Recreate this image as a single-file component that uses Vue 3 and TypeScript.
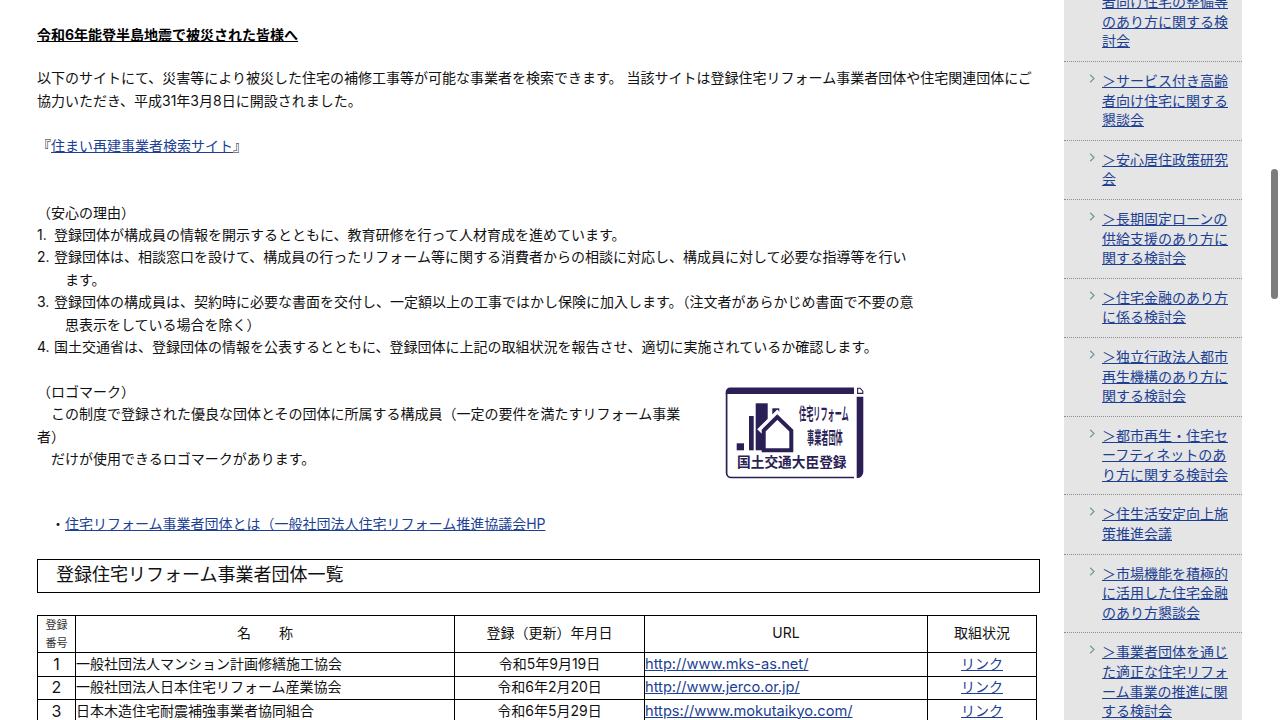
<script setup lang="ts">
const sideItems: string[] = [
  '＞サービス付き高齢者向け住宅の整備等のあり方に関する検討会',
  '＞サービス付き高齢者向け住宅に関する懇談会',
  '＞安心居住政策研究会',
  '＞長期固定ローンの供給支援のあり方に関する検討会',
  '＞住宅金融のあり方に係る検討会',
  '＞独立行政法人都市再生機構のあり方に関する検討会',
  '＞都市再生・住宅セーフティネットのあり方に関する検討会',
  '＞住生活安定向上施策推進会議',
  '＞市場機能を積極的に活用した住宅金融のあり方懇談会',
  '＞事業者団体を通じた適正な住宅リフォーム事業の推進に関する検討会',
]
const rows = [
  { no: 1, name: '一般社団法人マンション計画修繕施工協会', date: '令和5年9月19日', url: 'http://www.mks-as.net/' },
  { no: 2, name: '一般社団法人日本住宅リフォーム産業協会', date: '令和6年2月20日', url: 'http://www.jerco.or.jp/' },
  { no: 3, name: '日本木造住宅耐震補強事業者協同組合', date: '令和6年5月29日', url: 'https://www.mokutaikyo.com/' },
]
</script>

<template>
  <div class="page">
    <main class="main">
      <p class="heading">令和6年能登半島地震で被災された皆様へ</p>
      <p class="intro">以下のサイトにて、災害等により被災した住宅の補修工事等が可能な事業者を検索できます。 当該サイトは登録住宅リフォーム事業者団体や住宅関連団体にご協力いただき、平成31年3月8日に開設されました。</p>
      <p class="gap1">『<a href="#">住まい再建事業者検索サイト</a>』</p>
      <p class="gap2">（安心の理由）</p>
      <p><span class="num">1.</span>登録団体が構成員の情報を開示するとともに、教育研修を行って人材育成を進めています。</p>
      <p><span class="num">2.</span>登録団体は、相談窓口を設けて、構成員の行ったリフォーム等に関する消費者からの相談に対応し、構成員に対して必要な指導等を行い</p>
      <p class="cont">ます。</p>
      <p><span class="num">3.</span>登録団体の構成員は、契約時に必要な書面を交付し、一定額以上の工事ではかし保険に加入します。（注文者があらかじめ書面で不要の意</p>
      <p class="cont">思表示をしている場合を除く）</p>
      <p><span class="num">4.</span>国土交通省は、登録団体の情報を公表するとともに、登録団体に上記の取組状況を報告させ、適切に実施されているか確認します。</p>

      <section class="logo-block">
        <div class="logo-text">
          <p>（ロゴマーク）</p>
          <p>　この制度で登録された優良な団体とその団体に所属する構成員（一定の要件を満たすリフォーム事業者）</p>
          <p>　だけが使用できるロゴマークがあります。</p>
        </div>
        <svg class="logo" width="140" height="93" viewBox="0 0 140 93" aria-label="住宅リフォーム事業者団体 国土交通大臣登録">
          <path d="M0.7 7V5a4.5 4.5 0 0 1 4.5-4.5H129V7Z" fill="#2b1f55" />
          <path d="M1.6 6V86a4.5 4.5 0 0 0 4.5 4.5H129" fill="none" stroke="#2b1f55" stroke-width="1.7" />
          <path d="M131.7 9.7h6.6V85a6 6 0 0 1-6.6 6Z" fill="#2b1f55" />
          <path d="M132.6 1.2h2.6l2.6 3v2.2h-5.2Z" fill="#fff" stroke="#2b1f55" stroke-width="1.1" />
          <rect x="11.7" y="56.3" width="7.3" height="7" fill="#2b1f55" />
          <rect x="24" y="29" width="4.7" height="34.3" fill="#2b1f55" />
          <rect x="30.7" y="16.3" width="12" height="47" fill="#2b1f55" />
          <rect x="47.3" y="21.3" width="7" height="12" fill="#2b1f55" />
          <path d="M35 45 52.3 28 70 45" fill="none" stroke="#fff" stroke-width="8" />
          <path d="M38.7 63.3V43.5L52.3 30l14 13.5v19.8Z" fill="#fff" stroke="#2b1f55" stroke-width="4" />
          <g class="logo-type">
            <text transform="translate(74 33) scale(.42 1)" font-size="17">住宅リフォーム</text>
            <text transform="translate(82 57) scale(.42 1)" font-size="17">事業者団体</text>
            <text x="12" y="79.5" font-size="13.7">国土交通大臣登録</text>
          </g>
        </svg>
      </section>

      <p class="hp">　・<a href="#">住宅リフォーム事業者団体とは（一般社団法人住宅リフォーム推進協議会HP</a></p>

      <h2 class="box-title">登録住宅リフォーム事業者団体一覧</h2>

      <table class="list">
        <colgroup>
          <col class="c1" /><col class="c2" /><col class="c3" /><col class="c4" /><col class="c5" />
        </colgroup>
        <thead>
          <tr>
            <th class="small">登録<br />番号</th>
            <th>名　　称</th>
            <th>登録（更新）年月日</th>
            <th>URL</th>
            <th>取組状況</th>
          </tr>
        </thead>
        <tbody>
          <tr v-for="r in rows" :key="r.no">
            <td class="no">{{ r.no }}</td>
            <td>{{ r.name }}</td>
            <td class="center">{{ r.date }}</td>
            <td class="url"><a href="#">{{ r.url }}</a></td>
            <td class="center"><a href="#">リンク</a></td>
          </tr>
        </tbody>
      </table>
    </main>

    <aside class="side">
      <ul>
        <li v-for="item in sideItems" :key="item">
          <svg class="chev" width="7" height="9" viewBox="0 0 7 9"><path d="M1.2 0.8 5 4.5 1.2 8.2" fill="none" stroke="#6f9a94" stroke-width="1.2" /></svg>
          <a href="#">{{ item }}</a>
        </li>
      </ul>
    </aside>

    <div class="thumb"></div>
  </div>
</template>

<style>
html, body { margin: 0; background: #fff; overflow: hidden; }
</style>

<style scoped>
.page {
  position: relative;
  display: flex;
  align-items: flex-start;
  width: 1280px;
  height: 720px;
  overflow: hidden;
  font-family: Inter, "Noto Sans CJK JP", sans-serif;
  font-size: 14px;
  line-height: 22.4px;
  color: #111;
}
p { margin: 0; }
a { color: #1c3f94; text-decoration: underline; }
.main { width: 1003px; margin-left: 37px; padding-top: 24px; flex: none; }
.heading { font-weight: 700; text-decoration: underline; color: #000; }
.intro { margin-top: 20.8px; }
.gap1 { margin-top: 22.8px; }
.gap2 { margin-top: 44.4px; }
.num { display: inline-block; width: 17px; }
.cont { padding-left: 28px; }
.logo-block { display: flex; margin-top: 22.4px; align-items: flex-start; }
.logo-text { width: 645px; flex: none; }
.logo { flex: none; margin: 6px 0 0 43px; }
.logo-type { fill: #2b1f55; font-weight: 700; font-family: "Noto Sans CJK JP", sans-serif; }
.hp { margin-top: 33.6px; }
.box-title {
  margin: 23.5px 0 0;
  height: 32px;
  border: 1px solid #000;
  padding-left: 18px;
  font-size: 18px;
  font-weight: 400;
  line-height: 30px;
  width: 983px;
}
.list {
  margin-top: 22px;
  border-collapse: collapse;
  table-layout: fixed;
  width: 999px;
}
.c1 { width: 38px; } .c2 { width: 379px; } .c3 { width: 190px; } .c4 { width: 283px; } .c5 { width: 109px; }
.list th, .list td { border: 1px solid #000; padding: 0 0 2px; font-weight: 400; height: 20.5px; line-height: 20px; text-align: left; }
.list th { text-align: center; height: 33px; padding: 0 0 2px; }
.list th.small { font-size: 11px; line-height: 18px; color: #333; padding: 0; }
.list .center { text-align: center; }
.list .no { text-align: center; font-size: 16px; }
.list .url a { font-size: 14.65px; }
.side { width: 178px; margin: -36.4px 0 0 24px; flex: none; background: #e5e5e5; line-height: 19.6px; }
.side ul { list-style: none; margin: 0; padding: 0; }
.side li {
  position: relative;
  padding: 9px 14px 10px 38px;
  border-bottom: 1px dotted #8c8c8c;
}
.chev { position: absolute; left: 25px; top: 12px; }
.thumb {
  position: absolute;
  left: 1271px;
  top: 169px;
  width: 7px;
  height: 130px;
  border-radius: 4px;
  background: #7d7d7d;
}
</style>
